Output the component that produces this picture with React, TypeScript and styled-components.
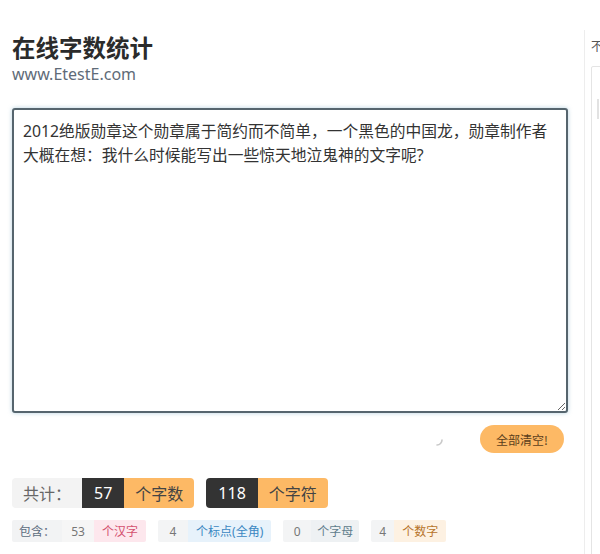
import styled, { createGlobalStyle } from "styled-components";

const GlobalStyle = createGlobalStyle`
  html, body {
    margin: 0;
    padding: 0;
    background: #fff;
    overflow: hidden;
  }
  body {
    font-family: "Noto Sans", "Noto Sans CJK SC", sans-serif;
    color: #333;
  }
`;

const Page = styled.div`
  display: flex;
  align-items: flex-start;
  gap: 16px;
  width: 900px;
  height: 554px;
  padding-left: 12px;
`;

const Main = styled.main`
  width: 556px;
  flex: none;
  padding-top: 32px;
`;

const Title = styled.h1`
  margin: 0;
  font-size: 23.5px;
  line-height: 32px;
  font-weight: 700;
  color: #2b2b2b;
`;

const Subtitle = styled.div`
  font-size: 16px;
  line-height: 20px;
  color: #5f6b78;
`;

const Editor = styled.textarea`
  display: block;
  box-sizing: border-box;
  width: 100%;
  height: 305px;
  margin: 24px 0 0;
  padding: 9px 9px;
  border: 2px solid #56656e;
  border-radius: 3px;
  box-shadow: 0 0 4px rgba(120, 170, 195, 0.55);
  font-family: "Noto Sans", "Noto Sans CJK SC", sans-serif;
  font-size: 15.75px;
  line-height: 24px;
  color: #333;
  outline: none;
  resize: vertical;
`;

const Actions = styled.div`
  display: flex;
  justify-content: flex-end;
  align-items: center;
  gap: 36px;
  margin-top: 12px;
  padding-right: 4px;
`;

const Spinner = styled.svg`
  width: 14px;
  height: 14px;
  margin-top: 2px;
`;

const ClearButton = styled.button`
  width: 84px;
  height: 28px;
  border: none;
  border-radius: 14px;
  background: #fdb965;
  color: #5b3f1c;
  font-family: "Noto Sans CJK SC", sans-serif;
  font-size: 12px;
  padding: 0;
  cursor: pointer;
`;

const StatsRow = styled.div<{ $top: number }>`
  display: flex;
  gap: 12px;
  margin-top: ${({ $top }) => $top}px;
`;

const Group = styled.div<{ $radius: number }>`
  display: flex;
  border-radius: ${({ $radius }) => $radius}px;
  overflow: hidden;
`;

const Segment = styled.span<{ $bg: string; $fg: string; $size: number; $h: number; $pad: number; $min: number }>`
  display: flex;
  align-items: center;
  justify-content: center;
  box-sizing: border-box;
  min-width: ${({ $min }) => $min}px;
  height: ${({ $h }) => $h}px;
  padding: 0 ${({ $pad }) => $pad}px;
  background: ${({ $bg }) => $bg};
  color: ${({ $fg }) => $fg};
  font-size: ${({ $size }) => $size}px;
  white-space: nowrap;
`;

const Sidebar = styled.aside`
  flex: none;
  width: 300px;
  margin-top: 30px;
  height: 524px;
  border-left: 1px solid #ededed;
  padding: 8px 0 0 6px;
  box-sizing: border-box;
`;

const SideNote = styled.div`
  font-size: 12px;
  line-height: 18px;
  color: #555;
  white-space: nowrap;
`;

const SideBox = styled.div`
  margin-top: 10px;
  height: 500px;
  border: 1px solid #e4e4e4;
  border-radius: 2px;
  padding: 32px 0 0 5px;
  box-sizing: border-box;
`;

const SideMark = styled.div`
  width: 2px;
  height: 20px;
  background: #e2e2e2;
`;

type Part = { text: string; bg: string; fg: string; pad?: number; min?: number };

const bigGroups: Part[][] = [
  [
    { text: "共计：", bg: "#f3f3f3", fg: "#666", pad: 11 },
    { text: "57", bg: "#333333", fg: "#fff", pad: 12 },
    { text: "个字数", bg: "#fdb965", fg: "#444", pad: 11 },
  ],
  [
    { text: "118", bg: "#333333", fg: "#fff", pad: 12 },
    { text: "个字符", bg: "#fdb965", fg: "#444", pad: 11 },
  ],
];

const smallGroups: Part[][] = [
  [
    { text: "包含：", bg: "#f2f3f4", fg: "#5d6d80", pad: 7 },
    { text: "53", bg: "#f6f6f6", fg: "#777", min: 32 },
    { text: "个汉字", bg: "#fde7ed", fg: "#d4506f" },
  ],
  [
    { text: "4", bg: "#f3f4f5", fg: "#777", min: 30 },
    { text: "个标点(全角)", bg: "#e7f2fb", fg: "#3a87c2" },
  ],
  [
    { text: "0", bg: "#f3f4f5", fg: "#777", min: 28 },
    { text: "个字母", bg: "#eef1f3", fg: "#5f7d8c", pad: 6 },
  ],
  [
    { text: "4", bg: "#f3f4f5", fg: "#777", min: 23 },
    { text: "个数字", bg: "#fdf1e2", fg: "#b7742a" },
  ],
];

const sample =
  "2012绝版勋章这个勋章属于简约而不简单，一个黑色的中国龙，勋章制作者大概在想：我什么时候能写出一些惊天地泣鬼神的文字呢?";

export default function App() {
  return (
    <>
      <GlobalStyle />
      <Page>
        <Main>
          <Title>在线字数统计</Title>
          <Subtitle>www.EtestE.com</Subtitle>
          <Editor defaultValue={sample} spellCheck={false} />
          <Actions>
            <Spinner viewBox="0 0 14 14">
              <path d="M12 7a5 5 0 0 1-5 5" fill="none" stroke="#c9c9c9" strokeWidth="1.6" strokeLinecap="round" />
            </Spinner>
            <ClearButton>全部清空!</ClearButton>
          </Actions>
          <StatsRow $top={25}>
            {bigGroups.map((g, i) => (
              <Group key={i} $radius={4}>
                {g.map((p) => (
                  <Segment key={p.text} $bg={p.bg} $fg={p.fg} $size={16} $h={30} $pad={p.pad ?? 12} $min={0}>
                    {p.text}
                  </Segment>
                ))}
              </Group>
            ))}
          </StatsRow>
          <StatsRow $top={12}>
            {smallGroups.map((g, i) => (
              <Group key={i} $radius={2}>
                {g.map((p) => (
                  <Segment key={p.text} $bg={p.bg} $fg={p.fg} $size={12} $h={22} $pad={p.pad ?? 8} $min={p.min ?? 0}>
                    {p.text}
                  </Segment>
                ))}
              </Group>
            ))}
          </StatsRow>
        </Main>
        <Sidebar>
          <SideNote>不限字数，实时统计</SideNote>
          <SideBox>
            <SideMark />
          </SideBox>
        </Sidebar>
      </Page>
    </>
  );
}
